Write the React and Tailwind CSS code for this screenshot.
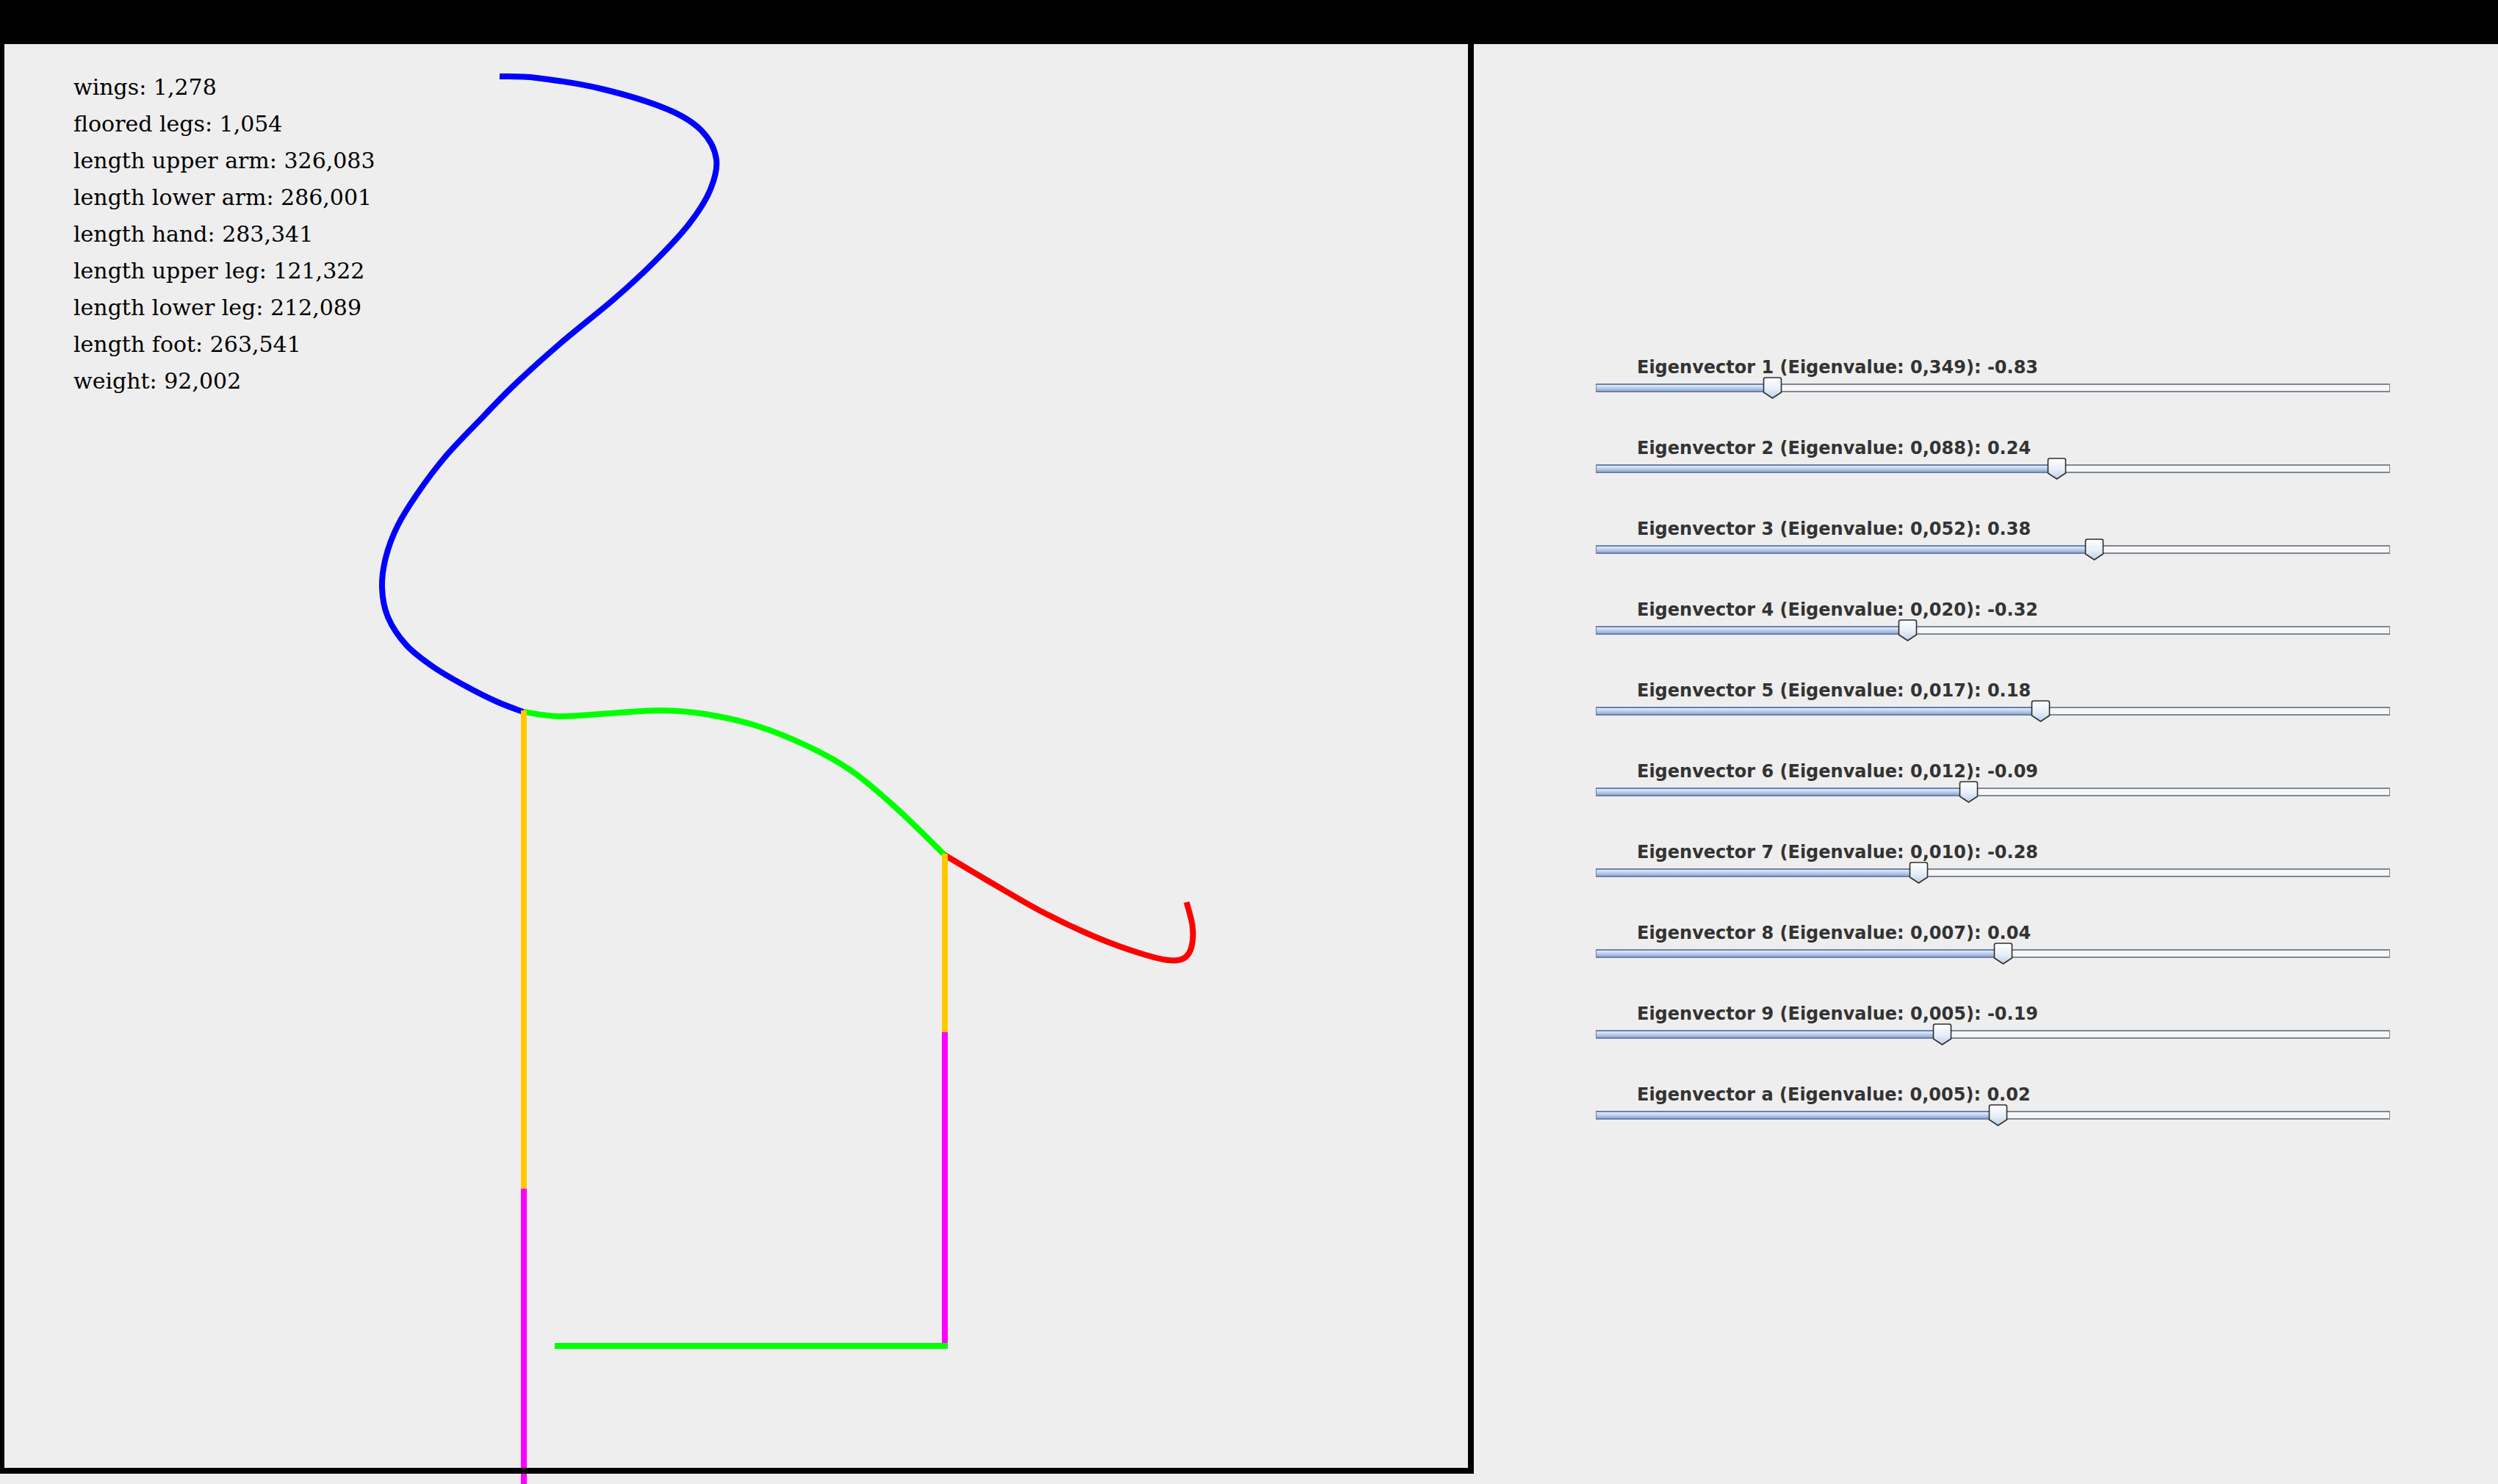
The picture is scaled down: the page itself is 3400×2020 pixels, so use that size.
import React from "react";

const stats = [
  "wings: 1,278",
  "floored legs: 1,054",
  "length upper arm: 326,083",
  "length lower arm: 286,001",
  "length hand: 283,341",
  "length upper leg: 121,322",
  "length lower leg: 212,089",
  "length foot: 263,541",
  "weight: 92,002",
];

const vectors = [
  ["1", "0,349", -0.83],
  ["2", "0,088", 0.24],
  ["3", "0,052", 0.38],
  ["4", "0,020", -0.32],
  ["5", "0,017", 0.18],
  ["6", "0,012", -0.09],
  ["7", "0,010", -0.28],
  ["8", "0,007", 0.04],
  ["9", "0,005", -0.19],
  ["a", "0,005", 0.02],
];

// catmull-rom -> cubic bezier
const smooth = (pts) => {
  let d = `M${pts[0][0]},${pts[0][1]}`;
  for (let i = 0; i < pts.length - 1; i++) {
    const p0 = pts[i - 1] || pts[i];
    const p1 = pts[i];
    const p2 = pts[i + 1];
    const p3 = pts[i + 2] || p2;
    const c1 = [p1[0] + (p2[0] - p0[0]) / 6, p1[1] + (p2[1] - p0[1]) / 6];
    const c2 = [p2[0] - (p3[0] - p1[0]) / 6, p2[1] - (p3[1] - p1[1]) / 6];
    d += ` C${c1[0]},${c1[1]} ${c2[0]},${c2[1]} ${p2[0]},${p2[1]}`;
  }
  return d;
};

const arm = [
  [680, 104], [730, 106], [819, 121], [909, 149], [955, 178], [975, 217],
  [966, 260], [937, 306], [891, 356], [837, 406], [762, 468], [700, 524],
  [650, 575], [605, 623], [568, 672], [541, 716], [525, 759], [520, 800],
  [528, 840], [553, 878], [590, 908], [634, 934], [676, 955], [712, 969],
];

const lowerArm = [
  [713, 969], [760, 975], [830, 971], [900, 967], [960, 972], [1030, 988],
  [1100, 1016], [1160, 1050], [1220, 1100], [1286, 1164],
];

const hand = [
  [1286, 1164], [1350, 1202], [1420, 1242], [1490, 1275], [1550, 1297],
  [1590, 1307], [1612, 1304], [1622, 1288], [1623, 1260], [1615, 1228],
];

const Figure = () => (
  <svg className="absolute left-0 top-0 -z-10" width="3400" height="2020" viewBox="0 0 3400 2020" fill="none" strokeWidth="8">
    <path d={smooth(arm)} stroke="#0000ff" />
    <path d={smooth(lowerArm)} stroke="#00ff00" />
    <path d={smooth(hand)} stroke="#ff0000" />
    <path d="M755,1832 H1290" stroke="#00ff00" />
    <path d="M713,1618 V2020" stroke="#ff00ff" />
    <path d="M1286,1405 V1828" stroke="#ff00ff" />
    <path d="M713,967 V1618" stroke="#ffc800" />
    <path d="M1286,1162 V1405" stroke="#ffc800" />
  </svg>
);

const Thumb = ({ left }) => (
  <svg className="absolute top-0" style={{ left }} width="27" height="30" viewBox="0 0 27 30">
    <defs>
      <linearGradient id="thumbFill" x1="0" y1="0" x2="0" y2="1">
        <stop offset="0" stopColor="#ffffff" />
        <stop offset="0.55" stopColor="#e6eef8" />
        <stop offset="1" stopColor="#bccfe8" />
      </linearGradient>
    </defs>
    <path d="M1.5,3.5 Q1.5,1 4,1 H23 Q25.5,1 25.5,3.5 V21 L13.5,29 L1.5,21 Z" fill="url(#thumbFill)" stroke="#2e2e2e" strokeWidth="1.6" />
  </svg>
);

const Slider = ({ value }) => {
  const pos = Math.round(540 + value * 362);
  return (
    <div className="relative h-[30px] w-[1081px] pt-[9px]">
      <div className="flex h-[12px]">
        <div
          className="h-full border-y-2 border-l border-[#6b7fae] bg-gradient-to-b from-[#e4edf8] via-[#bccfe8] to-[#93acd3]"
          style={{ width: pos }}
        />
        <div className="flex-1 h-full border-y-2 border-r border-[#80878f] bg-[#f6f6f6]" />
      </div>
      <Thumb left={pos - 13} />
    </div>
  );
};

const App = () => {
  return (
    <div className="relative isolate w-[3400px] h-[2020px] bg-[#eeeeee] flex flex-col overflow-hidden">
      <div className="h-[60px] bg-black" />
      <div className="flex h-[1946px]">
        <div className="w-[2006px] h-full border-l-[6px] border-r-8 border-b-8 border-black pl-[94px] pt-[34px] font-['DejaVu_Serif',serif] text-[30px] leading-[50px] text-black">
          {stats.map((s) => (
            <div key={s}>{s}</div>
          ))}
        </div>
        <div className="flex-1 pl-[166px] pt-[427px] flex flex-col gap-[54px]">
          {vectors.map(([n, ev, v]) => (
            <div key={n}>
              <div className="pl-[56px] font-['DejaVu_Sans',sans-serif] font-bold text-[24px] leading-[26px] text-[#333333] whitespace-nowrap">
                Eigenvector {n} (Eigenvalue: {ev}): {v.toFixed(2)}
              </div>
              <Slider value={v} />
            </div>
          ))}
        </div>
      </div>
      <Figure />
    </div>
  );
};

export default App;
